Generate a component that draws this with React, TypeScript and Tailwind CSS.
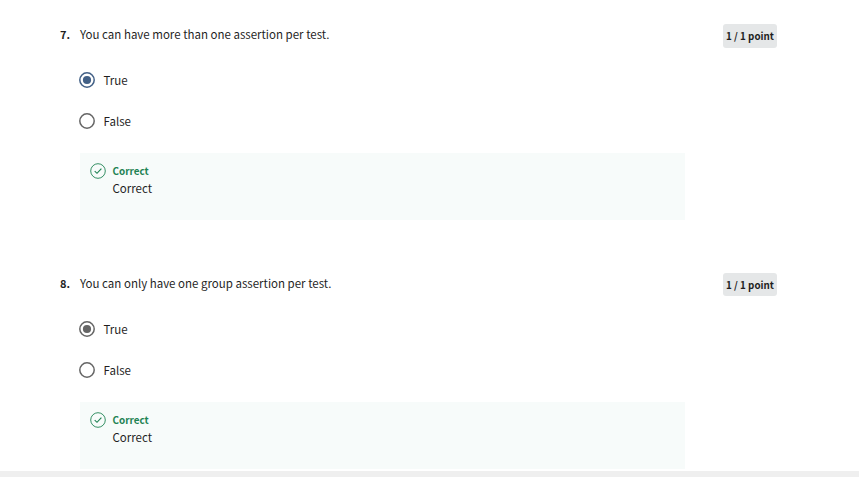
type RadioProps = { label: string; checked?: boolean; active?: boolean };
type QuestionProps = { number: number; prompt: string; active?: boolean };

function Radio({ label, checked, active }: RadioProps) {
  return (
    <div role="radio" aria-checked={!!checked} className="flex h-[18px] items-center gap-[8.5px]">
      <svg
        viewBox="0 0 16 16"
        className={active ? "size-4 shrink-0 text-[#426086]" : "size-4 shrink-0 text-[#656565]"}
      >
        <circle cx="8" cy="8" r="7.2" fill="none" stroke="currentColor" strokeWidth="1.5" />
        {checked && <circle cx="8" cy="8" r="4.1" fill="currentColor" />}
      </svg>
      <span className="text-[11.5px] leading-[18px]">{label}</span>
    </div>
  );
}

function Question({ number, prompt, active }: QuestionProps) {
  return (
    <section className="flex h-[249px] items-start pl-[60px]">
      <span className="mt-[2px] w-5 shrink-0 text-[11px] leading-4 font-bold">{number}.</span>
      <div className="w-[605px] shrink-0">
        <p className="mt-px text-[11.5px] leading-[18px]">{prompt}</p>
        <div role="radiogroup" className="mt-[28px] -ml-px flex flex-col gap-[23px]">
          <Radio label="True" checked active={active} />
          <Radio label="False" />
        </div>
        <div className="mt-[23px] flex h-[67px] gap-[6px] bg-[#f7fbfa] pt-[10px] pl-[10px]">
          <svg viewBox="0 0 16 16" className="size-4 shrink-0" fill="none" stroke="#1f8354">
            <circle cx="8" cy="8" r="7.3" strokeWidth="0.9" />
            <path d="M4.7 8.1 7 10.3 11.4 5.6" strokeWidth="1.15" />
          </svg>
          <div className="pl-[0.5px]">
            <p className="text-[9.9px] leading-4 font-bold text-[#1f8354]">Correct</p>
            <p className="text-[11.5px] leading-[18px]">Correct</p>
          </div>
        </div>
      </div>
      <div
        className={
          active
            ? "ml-[38px] flex h-6 w-[54px] shrink-0 items-center justify-center rounded-[3px] bg-[#e5e7e8] pt-px text-[9.8px] font-bold whitespace-nowrap"
            : "ml-[38px] flex h-[23px] w-[54px] shrink-0 items-center justify-center rounded-[3px] bg-[#e5e7e8] pt-[2px] text-[9.8px] font-bold whitespace-nowrap"
        }
      >
        1 / 1 point
      </div>
    </section>
  );
}

export default function App() {
  return (
    <main className="flex h-[477px] w-[859px] flex-col overflow-hidden bg-white font-['Noto_Sans_CJK_SC',sans-serif] text-[#1f1f1f]">
      <div className="h-[471px] shrink-0 overflow-hidden pt-6">
        <Question number={7} prompt="You can have more than one assertion per test." active />
        <Question number={8} prompt="You can only have one group assertion per test." />
      </div>
      <div className="h-[6px] shrink-0 bg-[#efefef]" />
    </main>
  );
}
